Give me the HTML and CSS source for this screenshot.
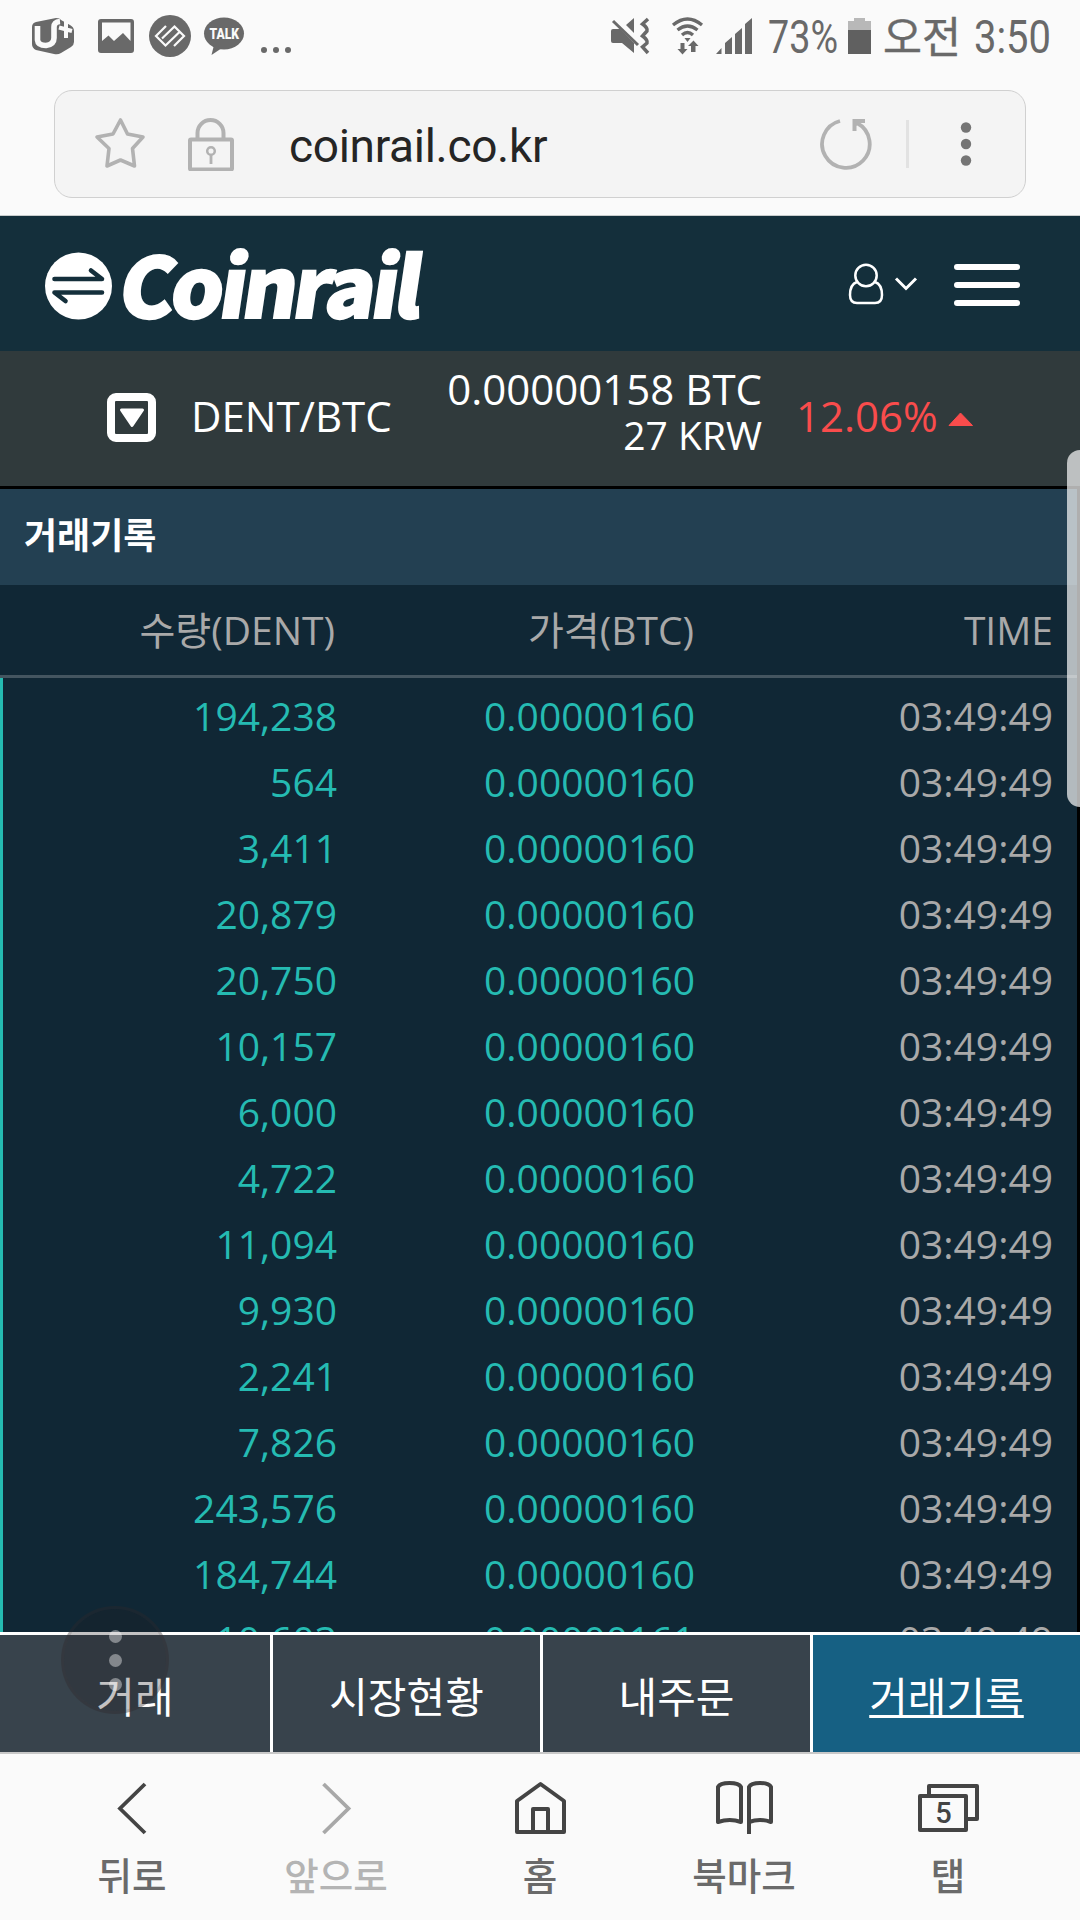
FILE: index.html
```html
<!DOCTYPE html>
<html lang="ko">
<head>
    <meta charset="UTF-8">
    <meta name="viewport" content="width=device-width, initial-scale=1.0">
    <title>Coinrail - 거래기록</title>
    <link rel="stylesheet" href="styles.css">
</head>
<body>

    <!-- Status bar -->
    <div class="status-bar">
        <svg class="status-left" width="280" height="80" viewBox="20 0 280 80">
            <path d="M32 27 Q32 23 36 22 L56 18 Q60 18 61 20 L70 25 Q74 27 74 31 V42 Q74 45 71 47 L61 53 Q58 55 54 54 L36 50 Q32 48 32 44 Z" fill="#696969"/>
            <path d="M37.500 26 V40 Q38 45.500 46 45.500 Q54 44.500 54 38 V27 Q54 22 60 21.500" fill="none" stroke="#fafafa" stroke-width="5.600"/>
            <path d="M66 20 V38 M59 27.500 L72 31" stroke="#fafafa" stroke-width="4"/>
            <path d="M101 19 h30 a3 3 0 0 1 3 3 v28 a3 3 0 0 1 -3 3 h-30 a3 3 0 0 1 -3 -3 v-28 a3 3 0 0 1 3 -3 z M102 22.500 V41 l6.500 -5.500 l5.500 5.500 l9 -8 l7.500 8 V22.500 z" fill="#696969" fill-rule="evenodd"/>
            <circle cx="170" cy="36" r="21" fill="#696969"/>
            <path d="M166 26 L156 36 L165.500 45.500 L179 32.500 M162 38.500 L174.500 26.500 L184 36 L174 46" fill="none" stroke="#fafafa" stroke-width="2.200"/>
            <ellipse cx="224" cy="33.500" rx="20" ry="16" fill="#696969"/>
            <path d="M214 45 L211.500 55 L222 48 Z" fill="#696969"/>
            <text class="talk" x="209.500" y="39" textLength="29.500" lengthAdjust="spacingAndGlyphs">TALK</text>
            <g fill="#696969"><circle cx="264" cy="50" r="3"/><circle cx="276" cy="50" r="3"/><circle cx="288" cy="50" r="3"/></g>
        </svg>
        <svg class="status-right" width="460" height="80" viewBox="600 0 460 80">
            <path d="M611 31 q0 -2 2 -2 h7 L634 43 V53 L622 43 H613 q-2 0 -2 -2 z M626 25 L634 18 V33 z" fill="#696969"/>
            <path d="M613 21 L638 45" stroke="#696969" stroke-width="3"/>
            <path d="M648 19 L642.500 24 Q648 28 647 31 L642.500 36 Q648 40 647 43 L642.500 47 L648 53" fill="none" stroke="#696969" stroke-width="3.500"/>
            <g fill="none" stroke="#696969" stroke-width="3.300">
                <path d="M673 25 Q687.500 13 702 25"/><path d="M677.500 30 Q687.500 22 697.500 30"/><path d="M682 35 Q687.500 30 693 35"/>
            </g>
            <path d="M684.500 38 h6 l-3 4 z M680.500 43 h4 v6 h3 l-5 5.500 l-5 -5.500 h3 z M691 52 v-6 h-3 l5.500 -5.500 l5 5.500 h-3 v6 z" fill="#696969"/>
            <path d="M716 54 L721.500 48 V54 Z M725 54 V43 L732 37 V54 Z M735 54 V34 L742 28 V54 Z M745 54 V24 L752 18 V54 Z" fill="#696969"/>
            <text class="status-text" x="768" y="53" textLength="70" lengthAdjust="spacingAndGlyphs">73%</text>
            <path d="M848 21 h6 v-3 h11 v3 h6 v10 h-23 z" fill="#b8b8b8"/>
            <rect x="848" y="30" width="23" height="24" fill="#606060"/>
            <text class="status-text ampm" x="883" y="52.500" textLength="78" lengthAdjust="spacingAndGlyphs">오전</text>
            <text class="status-text" x="974" y="53" textLength="77" lengthAdjust="spacingAndGlyphs">3:50</text>
        </svg>
    </div>

    <!-- Address bar -->
    <div class="address-wrap">
        <div class="address-bar">
            <svg class="icon-star" width="54" height="54" viewBox="0 0 54 54"><path d="M27.500 3 L34.500 17 L50 20 L39.500 31.500 L41.500 49 L27.500 43 L14 49 L16 31.500 L4 20 L20 17 Z" fill="none" stroke="#b2b2b2" stroke-width="3.600" stroke-linejoin="round"/></svg>
            <svg class="icon-lock" width="48" height="54" viewBox="0 0 48 54"><path d="M10.500 21 V16 A13 13 0 0 1 36.500 16 V21" fill="none" stroke="#b2b2b2" stroke-width="4"/><rect x="3" y="22.500" width="42" height="30" rx="1" fill="none" stroke="#b2b2b2" stroke-width="4"/><circle cx="24" cy="34" r="3.800" fill="none" stroke="#b2b2b2" stroke-width="2.500"/><path d="M24 37 V47" stroke="#b2b2b2" stroke-width="2.800"/></svg>
            <span class="url">coinrail.co.kr</span>
            <svg class="icon-reload" width="54" height="54" viewBox="0 0 54 54"><path d="M21 4 A23.800 23.800 0 1 0 38 6" fill="none" stroke="#b2b2b2" stroke-width="3.800"/><path d="M33.500 2 H46 V6 H40 L37.500 9 V14 H33.500 Z" fill="#b2b2b2"/></svg>
            <span class="divider"></span>
            <svg class="icon-more" width="12" height="48" viewBox="0 0 12 48"><g fill="#757575"><circle cx="6" cy="7.500" r="5.200"/><circle cx="6" cy="24" r="5.200"/><circle cx="6" cy="40.500" r="5.200"/></g></svg>
        </div>
    </div>

    <!-- Site header -->
    <header class="header">
        <svg class="logo" width="390" height="134" viewBox="40 220 390 134">
            <circle cx="78.500" cy="289" r="33.500" fill="#fff"/>
            <g fill="none" stroke="#142f3b" stroke-width="4.600" stroke-linecap="round" stroke-linejoin="round">
                <path d="M54.500 282 H102 L91 273.500"/>
                <path d="M102 295.500 H54.500 L65.500 304"/>
            </g>
            <text class="logo-text" transform="translate(116 320.500) skewX(-8.500)" textLength="299" lengthAdjust="spacingAndGlyphs">Coinrail</text>
        </svg>
        <div class="header-menu">
            <svg class="icon-user" width="36" height="42" viewBox="0 0 36 42"><g fill="none" stroke="#fff" stroke-width="2.500"><circle cx="18" cy="12.500" r="10.700"/><path d="M9 19 C3 21 2 27 2 32 Q2 40 9 40 H27 Q34 40 34 32 C34 27 33 21 27 19"/></g></svg>
            <svg class="icon-down" width="24" height="16" viewBox="0 0 24 16"><path d="M2 2.500 L12 12.500 L22 2.500" fill="none" stroke="#fff" stroke-width="3"/></svg>
            <div class="hamburger"><span></span><span></span><span></span></div>
        </div>
    </header>

    <!-- Current coin -->
    <section class="ticker">
        <div class="coin-select"><svg width="26" height="20" viewBox="0 0 26 20"><path d="M2.500 2 H23.500 L13 17.500 Z" fill="#fff" stroke="#fff" stroke-width="3" stroke-linejoin="round"/></svg></div>
        <div class="pair">DENT/BTC</div>
        <div class="price">
            <div class="price-btc">0.00000158 BTC</div>
            <div class="price-krw">27 KRW</div>
        </div>
        <div class="change">12.06%</div>
        <svg class="icon-up" width="26" height="15" viewBox="0 0 26 15"><path d="M12.500 1 L24.500 13.500 H1 Z" fill="#f94c4c" stroke="#f94c4c" stroke-linejoin="round"/></svg>
    </section>

    <!-- Trade history -->
    <main class="history">
        <h2>거래기록</h2>
        <div class="row row-head"><span>수량(DENT)</span><span>가격(BTC)</span><span>TIME</span></div>
        <div class="rows" id="rows"></div>
    </main>

    <nav class="tabs">
        <a>거래</a>
        <a>시장현황</a>
        <a>내주문</a>
        <a class="active">거래기록</a>
    </nav>

    <!-- Browser toolbar -->
    <nav class="toolbar">
        <div class="tool">
            <svg width="60" height="60" viewBox="102 1778 60 60"><path d="M145 1784 L120 1808.500 L145 1833" fill="none" stroke="#444" stroke-width="3.800"/></svg>
            <span>뒤로</span>
        </div>
        <div class="tool disabled">
            <svg width="60" height="60" viewBox="306 1778 60 60"><path d="M323.500 1784 L348.500 1808.500 L323.500 1833" fill="none" stroke="#a8a8a8" stroke-width="3.800"/></svg>
            <span>앞으로</span>
        </div>
        <div class="tool">
            <svg width="60" height="60" viewBox="510 1778 60 60"><path d="M517 1832 V1801 L540.500 1784 L564 1801 V1832 Z M533 1831 V1809 H548 V1831" fill="none" stroke="#444" stroke-width="4" stroke-linejoin="round"/></svg>
            <span>홈</span>
        </div>
        <div class="tool">
            <svg width="60" height="60" viewBox="714 1778 60 60"><path d="M718 1822 V1787 Q720 1783 729.500 1783 Q739 1783 741 1787 V1822 Q730 1818 718 1822 Z M749 1834 V1787 Q751 1783 760 1783 Q769 1783 771 1787 V1822 Q760 1818 749 1822" fill="none" stroke="#444" stroke-width="4" stroke-linejoin="round"/></svg>
            <span>북마크</span>
        </div>
        <div class="tool">
            <svg width="64" height="60" viewBox="916 1778 64 60"><path d="M929 1795 V1786 H977 V1819 H968 M920 1796 H966 V1830 H920 Z" fill="none" stroke="#444" stroke-width="4" stroke-linejoin="round"/><text class="tab-count" x="943.500" y="1823" text-anchor="middle">5</text></svg>
            <span>탭</span>
        </div>
    </nav>

    <div class="scroll-handle"></div>
    <div class="float-button"><i></i><i></i><i></i></div>

    <script>
        const trades = [
            ['194,238', '0.00000160'], ['564', '0.00000160'], ['3,411', '0.00000160'],
            ['20,879', '0.00000160'], ['20,750', '0.00000160'], ['10,157', '0.00000160'],
            ['6,000', '0.00000160'], ['4,722', '0.00000160'], ['11,094', '0.00000160'],
            ['9,930', '0.00000160'], ['2,241', '0.00000160'], ['7,826', '0.00000160'],
            ['243,576', '0.00000160'], ['184,744', '0.00000160'], ['10,603', '0.00000161']
        ];

        document.getElementById('rows').innerHTML = trades.map(trade => `
            <div class="row">
                <span>${trade[0]}</span>
                <span>${trade[1]}</span>
                <span class="time">03:49:49</span>
            </div>
        `).join('');
    </script>

</body>
</html>
```

FILE: styles.css
```css
* {
    box-sizing: border-box;
}

body {
    margin: 0;
    width: 1080px;
    height: 1920px;
    overflow: hidden;
    position: relative;
    display: flex;
    flex-direction: column;
    background-color: #fafafa;
    font-family: 'Open Sans', 'Noto Sans CJK KR', sans-serif;
}

svg {
    display: block;
    flex: none;
}

/* Status bar */
.status-bar {
    height: 90px;
    padding: 0 20px;
    display: flex;
    justify-content: space-between;
}

.status-text {
    font: 46px Roboto, 'Noto Sans CJK KR', sans-serif;
    fill: #696969;
}

.ampm {
    font-size: 43px;
    stroke: #696969;
    stroke-width: .4px;
}

.talk {
    font: 900 15px Roboto, sans-serif;
    fill: #fafafa;
}

/* Address bar */
.address-wrap {
    height: 126px;
    padding: 0 54px;
    border-bottom: 1px solid #c8cccc;
}

.address-bar {
    height: 108px;
    display: flex;
    align-items: center;
    border: 1px solid #d0d0d0;
    border-radius: 18px;
    background-color: #f4f4f4;
    padding-left: 38px;
}

.icon-lock {
    margin-left: 40px;
}

.url {
    flex: 1;
    margin-left: 54px;
    padding-top: 3px;
    font: 46px Roboto, sans-serif;
    letter-spacing: -.3px;
    color: #252525;
}

.divider {
    width: 3px;
    height: 48px;
    margin-left: 33px;
    background-color: #e2e2e2;
}

.icon-more {
    margin: 0 53px 0 51px;
}

/* Site header */
.header {
    height: 135px;
    padding: 0 60px 0 40px;
    display: flex;
    justify-content: space-between;
    align-items: center;
    background-color: #142f3b;
}

.logo-text {
    font: 900 83px 'Noto Sans CJK KR', sans-serif;
    letter-spacing: -4px;
    fill: #fff;
    stroke: #fff;
    stroke-width: 2px;
}

.header-menu {
    display: flex;
    align-items: center;
}

.icon-down {
    margin-left: 10px;
}

.hamburger {
    width: 66px;
    margin: 3px 0 0 36px;
    display: flex;
    flex-direction: column;
    gap: 12px;
}

.hamburger span {
    height: 6px;
    border-radius: 3px;
    background-color: #fff;
}

/* Ticker */
.ticker {
    height: 138px;
    padding: 0 0 2px 107px;
    display: flex;
    align-items: center;
    background-color: #303a3c;
    border-bottom: 3px solid #000;
    color: #fff;
    font-size: 42px;
}

.coin-select {
    width: 49px;
    height: 49px;
    border: 8px solid #fff;
    border-radius: 9px;
    display: flex;
    align-items: center;
    justify-content: center;
}

.pair {
    width: 200px;
    margin-left: 35px;
    padding-bottom: 4px;
}

.price {
    width: 371px;
    text-align: right;
    padding-bottom: 14px;
}

.price-btc {
    line-height: 48px;
}

.price-krw {
    font-size: 39px;
    line-height: 44px;
}

.change {
    margin-left: 34px;
    padding-bottom: 4px;
    color: #f94c4c;
}

.icon-up {
    margin: 3px 0 0 10px;
}

/* Trade history */
.history {
    height: 1143px;
    overflow: hidden;
    border-right: 3px solid #000;
    background-color: #102735;
}

h2 {
    margin: 0;
    height: 96px;
    padding-left: 24px;
    background-color: #234052;
    color: #fff;
    font-size: 36px;
    line-height: 94px;
}

.row {
    height: 66px;
    display: grid;
    grid-template-columns: 334px 358px 1fr;
    padding-right: 24px;
    text-align: right;
    font-size: 39px;
    line-height: 66px;
    color: #25bbb2;
}

.row-head {
    grid-template-columns: 335px 359px 1fr;
    height: 93px;
    border-bottom: 3px solid #445560;
    line-height: 90px;
    color: #a9a9a9;
}

.rows {
    border-left: 3px solid #25bbb2;
    padding-top: 5px;
}

.time {
    color: #a9a9a9;
}

/* Page tabs */
.tabs {
    height: 122px;
    display: grid;
    grid-template-columns: 270px 267px 267px 267px;
    grid-template-rows: 117px;
    gap: 3px;
    border-top: 3px solid #fff;
    border-bottom: 2px solid #c8c8c8;
    background-color: #fff;
}

.tabs a {
    background-color: #38434c;
    color: #fff;
    font-size: 42px;
    line-height: 124px;
    text-align: center;
}

.tabs .active {
    background-color: #166083;
    text-decoration: underline;
    text-decoration-thickness: 3px;
}

/* Browser toolbar */
.toolbar {
    height: 166px;
    padding: 24px 30px 0;
    display: flex;
}

.tool {
    width: 204px;
    display: flex;
    flex-direction: column;
    align-items: center;
    color: #6a6a6a;
    font: 500 37.500px/72px 'Noto Sans CJK KR', sans-serif;
}

.tool.disabled {
    color: #b4b4b4;
}

.tab-count {
    font: 500 29px Roboto, sans-serif;
    fill: #444;
}

/* Overlays */
.scroll-handle {
    position: absolute;
    top: 450px;
    right: 0;
    width: 13px;
    height: 357px;
    border-radius: 18px 0 0 18px;
    background-color: rgba(250, 250, 250, .7);
}

.float-button {
    position: absolute;
    left: 61px;
    top: 1606px;
    width: 108px;
    height: 108px;
    border: 3px solid rgba(70, 60, 60, .15);
    border-radius: 50%;
    background-color: rgba(35, 30, 35, .27);
    display: flex;
    flex-direction: column;
    align-items: center;
    justify-content: center;
    gap: 11px;
}

.float-button i {
    width: 13px;
    height: 13px;
    border-radius: 50%;
    background-color: rgba(255, 255, 255, .4);
}
```
